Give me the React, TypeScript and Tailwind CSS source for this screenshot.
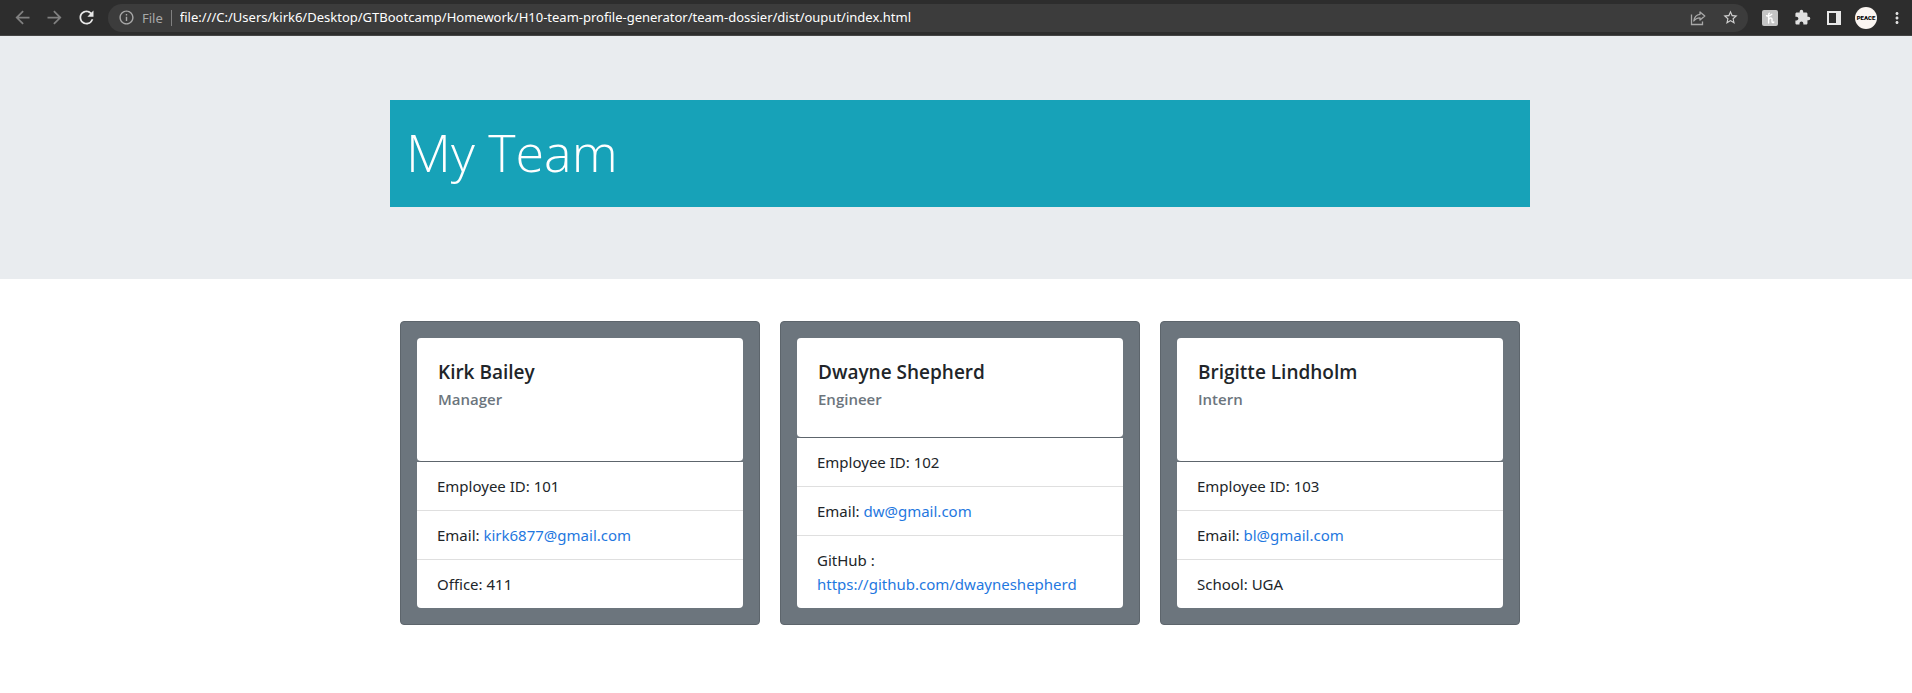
import type { ReactNode } from "react";
import {
  MdArrowBack,
  MdArrowForward,
  MdExtension,
  MdInfoOutline,
  MdMoreVert,
  MdRefresh,
  MdStarBorder,
} from "react-icons/md";

type Detail = { label: string; text?: string; href?: string; stacked?: boolean };
type Member = { name: string; role: string; details: Detail[] };

const team: Member[] = [
  {
    name: "Kirk Bailey",
    role: "Manager",
    details: [
      { label: "Employee ID: 101" },
      { label: "Email:", text: "kirk6877@gmail.com", href: "mailto:kirk6877@gmail.com" },
      { label: "Office: 411" },
    ],
  },
  {
    name: "Dwayne Shepherd",
    role: "Engineer",
    details: [
      { label: "Employee ID: 102" },
      { label: "Email:", text: "dw@gmail.com", href: "mailto:dw@gmail.com" },
      {
        label: "GitHub :",
        text: "https://github.com/dwayneshepherd",
        href: "https://github.com/dwayneshepherd",
        stacked: true,
      },
    ],
  },
  {
    name: "Brigitte Lindholm",
    role: "Intern",
    details: [
      { label: "Employee ID: 103" },
      { label: "Email:", text: "bl@gmail.com", href: "mailto:bl@gmail.com" },
      { label: "School: UGA" },
    ],
  },
];

function ToolButton({ label, width = "w-8", children }: { label: string; width?: string; children: ReactNode }) {
  return (
    <button type="button" aria-label={label} className={`flex h-8 items-center justify-center ${width}`}>
      {children}
    </button>
  );
}

function ShareIcon() {
  return (
    <svg viewBox="0 0 16 16" className="size-4" fill="none" stroke="currentColor" strokeWidth="1.3">
      <path d="M1.5 4.5V14.5H12.5V11.5" />
      <path d="M10 2L14.8 6L10 10V7.8C7 7.8 5.2 8.8 3.8 11C4.2 7.5 6 4.8 10 4.3Z" strokeLinejoin="round" />
    </svg>
  );
}

function HoneyIcon() {
  return (
    <svg viewBox="0 0 16 16" className="size-4">
      <rect width="16" height="16" rx="2" fill="#c4c4c4" />
      <path
        d="M4.5 5.8C6 6.2 8.5 5.5 9.8 4.2M7.4 3.2C6.4 3.6 6.6 5 6.6 6V13M6.6 9.8C7.4 7.6 10 7.2 10 9.3V11.5C10 12.8 11.2 12.8 11.8 12"
        fill="none"
        stroke="#fff"
        strokeWidth="1.4"
        strokeLinecap="round"
      />
    </svg>
  );
}

function SidePanelIcon() {
  return (
    <svg viewBox="0 0 14 14" className="size-[14px]">
      <path fill="#e8e8e8" fillRule="evenodd" d="M0 0H14V14H0ZM2 2V12H9V2Z" />
    </svg>
  );
}

function BrowserBar() {
  return (
    <header className="flex h-9 items-center border-b border-[#454545] bg-[#2d2d2d] pl-[6px]">
      <nav className="flex items-center text-[#808080]">
        <ToolButton label="Back"><MdArrowBack size={21} /></ToolButton>
        <ToolButton label="Forward"><MdArrowForward size={21} /></ToolButton>
        <span className="flex text-[#e8e8e8]">
          <ToolButton label="Reload"><MdRefresh size={21} /></ToolButton>
        </span>
      </nav>
      <div className="ml-[6px] flex h-7 grow items-center rounded-full bg-[#3c3c3c] pr-[2px] pl-[10px] font-['Noto_Sans','Open_Sans',sans-serif] text-[13px] text-[#a8a8a8]">
        <MdInfoOutline size={17} />
        <label htmlFor="address" className="ml-[7px] border-r border-[#808080] pr-2 leading-4">File</label>
        <input
          id="address"
          type="text"
          readOnly
          value="file:///C:/Users/kirk6/Desktop/GTBootcamp/Homework/H10-team-profile-generator/team-dossier/dist/ouput/index.html"
          className="min-w-0 grow bg-transparent pl-2 text-white outline-none"
        />
        <ToolButton label="Share"><ShareIcon /></ToolButton>
        <span className="flex text-[#d0d0d0]">
          <ToolButton label="Bookmark"><MdStarBorder size={17} /></ToolButton>
        </span>
      </div>
      <div className="ml-[6px] flex items-center text-[#e0e0e0]">
        <ToolButton label="Honey"><HoneyIcon /></ToolButton>
        <ToolButton label="Extensions"><MdExtension size={17} /></ToolButton>
        <ToolButton label="Side panel"><SidePanelIcon /></ToolButton>
        <ToolButton label="Profile">
          <span className="flex size-[22px] items-center justify-center rounded-full bg-[#fbf6f2] font-['Roboto',sans-serif] text-[6px] font-black text-black">
            PEACE
          </span>
        </ToolButton>
        <ToolButton label="Menu" width="w-[30px]"><MdMoreVert size={18} /></ToolButton>
      </div>
    </header>
  );
}

function MemberCard({ name, role, details }: Member) {
  return (
    <article className="flex flex-col rounded border border-[#5d656c] bg-[#6c757d] p-4">
      <div className="grow rounded border-b border-[#5d656c] bg-white px-[21px] pt-[22px] pb-7">
        <h2 className="text-[19px] leading-6 font-semibold">{name}</h2>
        <h3 className="mt-[5px] text-[15px] leading-5 font-semibold text-[#6c757d]">{role}</h3>
      </div>
      <ul className="divide-y divide-[#dfdfdf] rounded-b bg-white">
        {details.map((d) => (
          <li key={d.label} className="px-5 py-3 font-['Noto_Sans','Open_Sans',sans-serif] text-[15px] leading-6">
            {d.label}{" "}
            {d.href && (
              <a href={d.href} className={d.stacked ? "block text-[#1f78e0]" : "text-[#1f78e0]"}>
                {d.text}
              </a>
            )}
          </li>
        ))}
      </ul>
    </article>
  );
}

export default function App() {
  return (
    <div className="min-h-screen bg-white font-['Open_Sans','Noto_Sans',sans-serif] text-[#212529]">
      <BrowserBar />
      <main>
        <div className="bg-[#e9ecef] py-16 pl-2">
          <div className="mx-auto mb-2 max-w-[1140px] bg-[#17a2b8] px-4 pt-[18px] pb-[22px]">
            <h1 className="text-[52px] leading-[67px] font-light text-white">My Team</h1>
          </div>
        </div>
        <div className="pt-[42px] pl-2">
          <section className="mx-auto grid max-w-[1120px] grid-cols-3 gap-5">
            {team.map((m) => (
              <MemberCard key={m.name} {...m} />
            ))}
          </section>
        </div>
      </main>
    </div>
  );
}
